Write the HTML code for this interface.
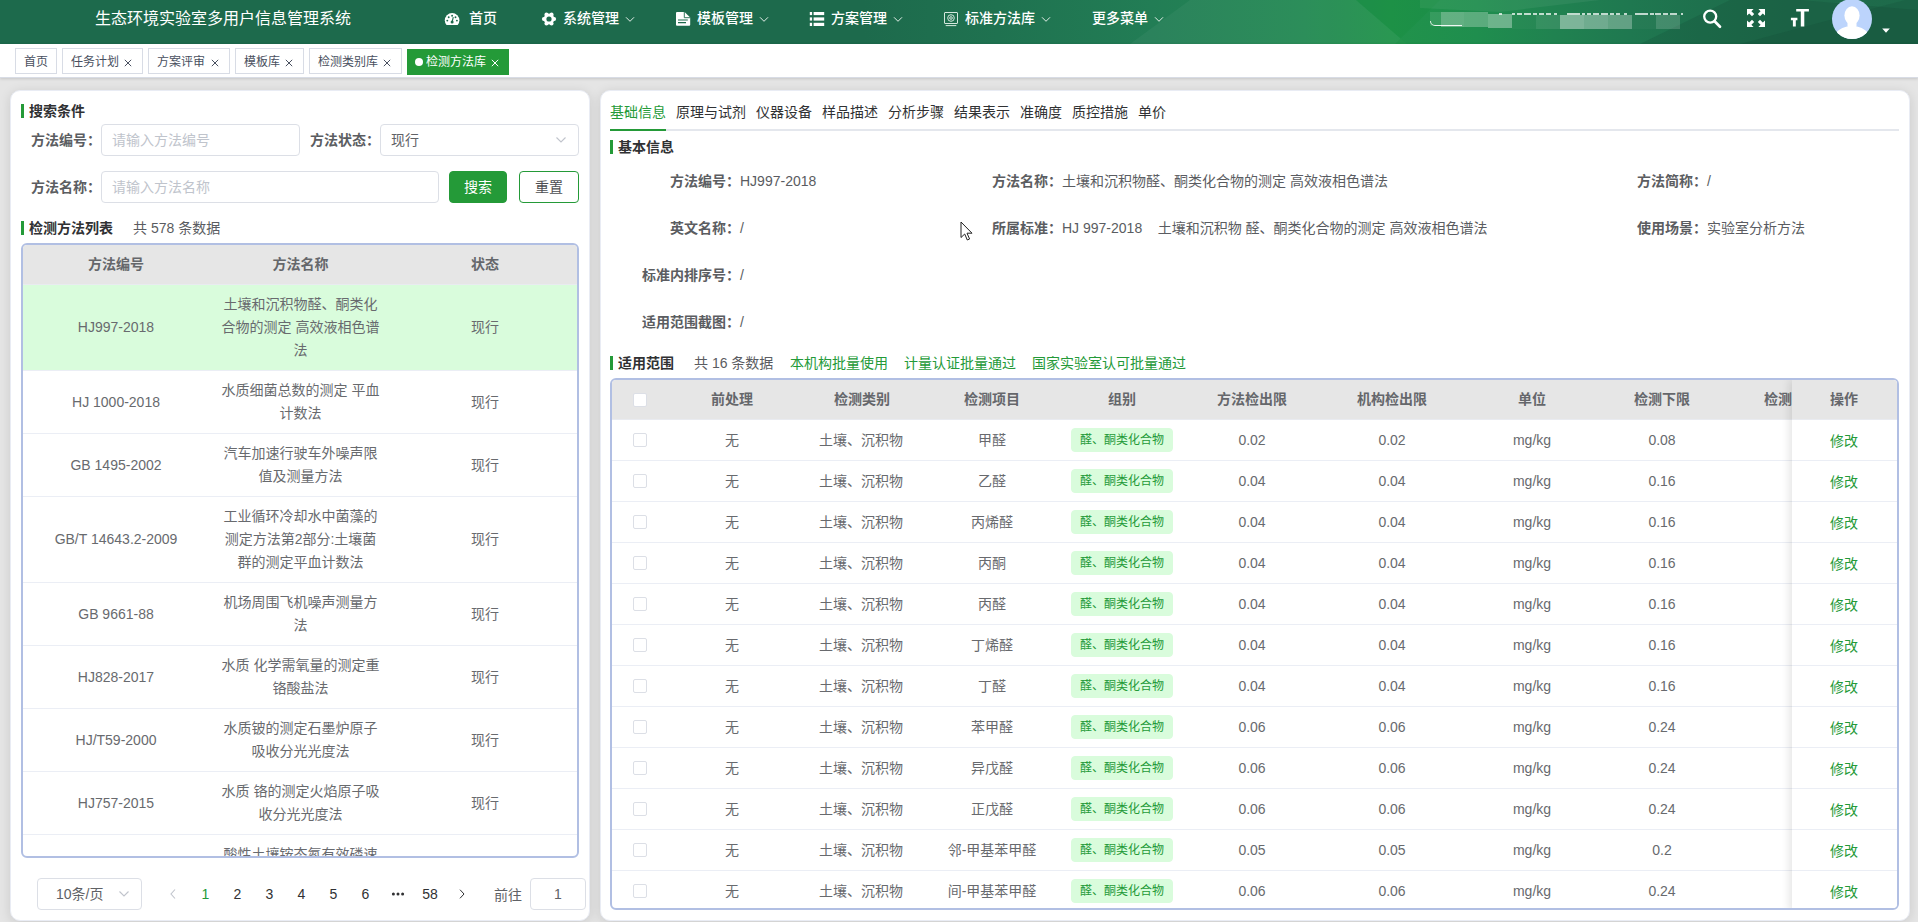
<!DOCTYPE html>
<html lang="zh-CN">
<head>
<meta charset="utf-8">
<title>生态环境实验室多用户信息管理系统</title>
<style>
*{box-sizing:border-box;}
html,body{margin:0;padding:0;}
body{width:1918px;height:922px;overflow:hidden;position:relative;background:#e5e5e5;
  font-family:"Liberation Sans","Noto Sans CJK SC",sans-serif;font-size:14px;color:#606266;}
.abs{position:absolute;white-space:nowrap;}
/* header */
#hd{position:absolute;left:0;top:0;width:1918px;height:44px;background:#1d6a4c;overflow:hidden;}
#hd svg.bg{position:absolute;left:0;top:0;}
#hd .title{position:absolute;left:95px;top:0;height:38px;line-height:38px;font-size:16px;color:#fff;white-space:nowrap;}
#hd .nav{position:absolute;top:0;height:38px;line-height:36px;font-size:14px;color:#fff;font-weight:500;white-space:nowrap;}
#hd .ico{position:absolute;}
/* tags */
#tags{position:absolute;left:0;top:44px;width:1918px;height:34px;background:#fff;border-bottom:1px solid #d8dce5;box-shadow:0 1px 3px 0 rgba(0,0,0,.12),0 0 3px 0 rgba(0,0,0,.04);}
#tags .tg{position:absolute;top:4px;height:26px;line-height:26px;border:1px solid #d8dce5;background:#fff;color:#495060;font-size:12px;padding:0 8px;white-space:nowrap;}
#tags .tg.on{top:5px;background:#249a38;border-color:#249a38;color:#fff;padding-left:7px;line-height:24px;}
#tags .tg .x{position:absolute;right:10px;top:10px;}
#tags .tg.on .x{top:9px;right:9px;}
#tags .tg.on:before{content:"";display:inline-block;width:8px;height:8px;border-radius:50%;background:#fff;margin-right:3px;position:relative;top:0px;}
/* panels */
.panel{position:absolute;top:90px;height:831px;background:#fff;border-radius:10px;border:1px solid #e9ecf4;box-shadow:0 2px 12px 0 rgba(0,0,0,.12);}
.sec{position:absolute;height:14px;border-left:3px solid #249a38;padding-left:5px;line-height:14px;font-size:14px;font-weight:bold;color:#303133;white-space:nowrap;}
.lbl{position:absolute;font-weight:bold;color:#5b5d61;font-size:14px;white-space:nowrap;line-height:20px;}
.val{position:absolute;color:#5a5c61;font-size:14px;white-space:nowrap;line-height:20px;}
.inp{position:absolute;height:32px;border:1px solid #dcdfe6;border-radius:4px;background:#fff;line-height:30px;padding-left:10px;color:#c0c4cc;font-size:14px;white-space:nowrap;}
.btn{position:absolute;height:32px;line-height:30px;border-radius:4px;font-size:14px;text-align:center;border:1px solid #249a38;}
.tbl{position:absolute;border:2px solid #b1bfe3;border-radius:6px;overflow:hidden;background:#fff;}
.tbl .th{position:absolute;left:0;top:0;height:40px;background:#e6e6e6;width:100%;border-bottom:1px solid #e9ebf0;}
.tbl .c{position:absolute;text-align:center;white-space:nowrap;line-height:23px;font-size:14px;color:#686a6e;transform:translateX(-50%);}
.tbl .h{font-weight:bold;color:#65676b;}
.tbl .ln{position:absolute;left:0;width:100%;height:1px;background:#ebeef5;}
.green{color:#249a38;}
</style>
<style>
.cb{position:absolute;width:14px;height:14px;border:1px solid #dcdfe6;border-radius:2px;background:#fff;}
.tag{position:absolute;height:24px;line-height:22px;width:102px;text-align:center;font-size:12px;color:#249a38;background:#d9fcdc;border:1px solid #d9fcdc;border-radius:4px;white-space:nowrap;}
.fix{position:absolute;background:#fff;box-shadow:-3px 0 8px rgba(0,0,0,.10);}
</style>
</head>
<body>
<div id="hd">
<svg class="bg" width="1918" height="44" viewBox="0 0 1918 44" preserveAspectRatio="none">
<defs>
<linearGradient id="g1" gradientUnits="userSpaceOnUse" x1="0" y1="0" x2="1918" y2="0">
<stop offset="0" stop-color="#1d6a4c"/>
<stop offset="0.45" stop-color="#1d6a4c"/>
<stop offset="0.52" stop-color="#1f7250"/>
<stop offset="0.6" stop-color="#227d55"/>
<stop offset="0.68" stop-color="#238953"/>
<stop offset="0.725" stop-color="#21934b"/>
<stop offset="0.77" stop-color="#1f8e4e"/>
<stop offset="0.81" stop-color="#208250"/>
<stop offset="0.85" stop-color="#1f7850"/>
<stop offset="0.89" stop-color="#1e704d"/>
<stop offset="0.94" stop-color="#1e6a4a"/>
<stop offset="1" stop-color="#1e6b4b"/>
</linearGradient>
</defs>
<rect x="0" y="0" width="1918" height="44" fill="url(#g1)"/>
<polygon points="1190,0 1356,0 1407,44 1130,44" fill="#ffffff" opacity="0.045"/>
<polygon points="1356,0 1440,0 1395,44 1407,44" fill="#0a8a30" opacity="0.18"/>
<polygon points="1420,0 1600,0 1500,12 1420,8" fill="#ffffff" opacity="0.06"/>
<polygon points="1640,44 1918,44 1918,10 1800,0 1730,0" fill="#0c3a2c" opacity="0.16"/>
<polygon points="1740,44 1918,44 1918,0 1905,0" fill="#0c3a2c" opacity="0.14"/>
</svg>
<div class="title">生态环境实验室多用户信息管理系统</div>
<div class="nav" style="left:469px">首页</div>
<div class="nav" style="left:563px">系统管理</div>
<div class="nav" style="left:697px">模板管理</div>
<div class="nav" style="left:831px">方案管理</div>
<div class="nav" style="left:965px">标准方法库</div>
<div class="nav" style="left:1092px">更多菜单</div>
<svg class="ico" style="left:625px;top:16px" width="10" height="7" viewBox="0 0 10 7"><path d="M1 1.3 L5 5.3 L9 1.3" fill="none" stroke="#e4efe9" stroke-width="1"/></svg>
<svg class="ico" style="left:759px;top:16px" width="10" height="7" viewBox="0 0 10 7"><path d="M1 1.3 L5 5.3 L9 1.3" fill="none" stroke="#e4efe9" stroke-width="1"/></svg>
<svg class="ico" style="left:893px;top:16px" width="10" height="7" viewBox="0 0 10 7"><path d="M1 1.3 L5 5.3 L9 1.3" fill="none" stroke="#e4efe9" stroke-width="1"/></svg>
<svg class="ico" style="left:1041px;top:16px" width="10" height="7" viewBox="0 0 10 7"><path d="M1 1.3 L5 5.3 L9 1.3" fill="none" stroke="#e4efe9" stroke-width="1"/></svg>
<svg class="ico" style="left:1154px;top:16px" width="10" height="7" viewBox="0 0 10 7"><path d="M1 1.3 L5 5.3 L9 1.3" fill="none" stroke="#e4efe9" stroke-width="1"/></svg>
<svg class="ico" style="left:444px;top:12px" width="16" height="14" viewBox="0 0 16 14"><defs><clipPath id="dc"><rect x="0" y="0" width="16" height="12.9"/></clipPath></defs><circle cx="8.1" cy="8.3" r="7.3" fill="#fff" clip-path="url(#dc)"/><g fill="#1d6a4c"><circle cx="3.3" cy="8.6" r=".95"/><circle cx="4.7" cy="5.2" r=".95"/><circle cx="8.1" cy="3.8" r=".95"/><circle cx="11.5" cy="5.2" r=".95"/><circle cx="12.9" cy="8.6" r=".95"/><circle cx="8.1" cy="10" r="1.5"/></g><path d="M8.1 10 L9.3 5.2" stroke="#1d6a4c" stroke-width="1.1" fill="none"/></svg>
<svg class="ico" style="left:541px;top:11px" width="16" height="16" viewBox="0 0 16 16"><g fill="#fff"><circle cx="8" cy="8" r="5.4"/><circle cx="13.1" cy="8" r="2"/><circle cx="2.9" cy="8" r="2"/><circle cx="10.55" cy="3.58" r="2"/><circle cx="5.45" cy="3.58" r="2"/><circle cx="10.55" cy="12.42" r="2"/><circle cx="5.45" cy="12.42" r="2"/></g><circle cx="8" cy="8" r="2.6" fill="#1d6a4c"/></svg>
<svg class="ico" style="left:675px;top:12px" width="16" height="14" viewBox="0 0 16 14"><path fill="#fff" d="M2 0h7.6l5.6 5.4V12.7a1 1 0 0 1-1 1H2a1 1 0 0 1-1-1V1a1 1 0 0 1 1-1z"/><path d="M9.3 0v5.7h5.9" stroke="#1d6a4c" stroke-width="0.9" fill="none"/><path d="M3 8h9.8M3 10.7h8" stroke="#1d6a4c" stroke-width="1.2" fill="none"/></svg>
<svg class="ico" style="left:809px;top:12px" width="16" height="14" viewBox="0 0 16 14"><g fill="#fff"><rect x="0.8" y="0" width="2.3" height="3.1"/><rect x="4.6" y="0" width="10.6" height="3.1"/><rect x="0.8" y="5.4" width="2.3" height="3.2"/><rect x="4.6" y="5.4" width="10.6" height="3.2"/><rect x="0.8" y="10.8" width="2.3" height="3.2"/><rect x="4.6" y="10.8" width="10.6" height="3.2"/></g></svg>
<svg class="ico" style="left:943px;top:11px" width="16" height="16" viewBox="0 0 16 16"><g fill="none" stroke="#d5e8de" stroke-width="1"><rect x="1.5" y="1.5" width="13" height="11" rx="0.5"/><circle cx="8" cy="7" r="3.3"/><circle cx="8" cy="7" r="1.3"/><path d="M2.7 14.6h10.6"/></g></svg>
<div class="abs" style="left:1430.0px;top:12.0px;width:10.5px;height:14.0px;background:rgba(255,255,255,0.10)"></div>
<div class="abs" style="left:1440.5px;top:12.0px;width:23.5px;height:14.5px;background:rgba(255,255,255,0.30)"></div>
<div class="abs" style="left:1464.0px;top:12.0px;width:24.0px;height:14.5px;background:rgba(255,255,255,0.27)"></div>
<div class="abs" style="left:1488.0px;top:13.5px;width:24.0px;height:14.0px;background:rgba(255,255,255,0.35)"></div>
<div class="abs" style="left:1512.0px;top:15.0px;width:24.0px;height:13.5px;background:rgba(255,255,255,0.03)"></div>
<div class="abs" style="left:1536.0px;top:15.0px;width:24.0px;height:13.5px;background:rgba(255,255,255,0.10)"></div>
<div class="abs" style="left:1560.0px;top:15.0px;width:23.5px;height:13.5px;background:rgba(255,255,255,0.42)"></div>
<div class="abs" style="left:1583.5px;top:15.0px;width:24.8px;height:13.5px;background:rgba(255,255,255,0.36)"></div>
<div class="abs" style="left:1608.3px;top:15.0px;width:23.5px;height:13.5px;background:rgba(255,255,255,0.30)"></div>
<div class="abs" style="left:1631.8px;top:15.0px;width:24.0px;height:13.5px;background:rgba(255,255,255,0.03)"></div>
<div class="abs" style="left:1655.8px;top:15.0px;width:24.2px;height:13.5px;background:rgba(255,255,255,0.17)"></div>
<div class="abs" style="left:1430px;top:21px;width:32px;height:5px;border-left:1.5px solid rgba(255,255,255,.85);border-bottom:1.5px solid rgba(255,255,255,.9);border-bottom-left-radius:5px"></div>
<div class="abs" style="left:1498.8px;top:13px;width:2.9px;height:2px;background:rgba(255,255,255,.72)"></div>
<div class="abs" style="left:1511.7px;top:13px;width:3.2px;height:2px;background:rgba(255,255,255,.72)"></div>
<div class="abs" style="left:1516.6px;top:13px;width:5.5px;height:2px;background:rgba(255,255,255,.72)"></div>
<div class="abs" style="left:1523.9px;top:13px;width:7.0px;height:2px;background:rgba(255,255,255,.72)"></div>
<div class="abs" style="left:1532.7px;top:13px;width:4.1px;height:2px;background:rgba(255,255,255,.72)"></div>
<div class="abs" style="left:1539.1px;top:13px;width:5.0px;height:2px;background:rgba(255,255,255,.72)"></div>
<div class="abs" style="left:1545.8px;top:13px;width:5.5px;height:2px;background:rgba(255,255,255,.72)"></div>
<div class="abs" style="left:1553.7px;top:13px;width:3.5px;height:2px;background:rgba(255,255,255,.72)"></div>
<div class="abs" style="left:1567.4px;top:13px;width:13.1px;height:2px;background:rgba(255,255,255,.72)"></div>
<div class="abs" style="left:1581.5px;top:13px;width:3.5px;height:2px;background:rgba(255,255,255,.72)"></div>
<div class="abs" style="left:1586.7px;top:13px;width:4.8px;height:2px;background:rgba(255,255,255,.72)"></div>
<div class="abs" style="left:1593.1px;top:13px;width:6.4px;height:2px;background:rgba(255,255,255,.72)"></div>
<div class="abs" style="left:1601.3px;top:13px;width:7.0px;height:2px;background:rgba(255,255,255,.72)"></div>
<div class="abs" style="left:1610.1px;top:13px;width:4.1px;height:2px;background:rgba(255,255,255,.72)"></div>
<div class="abs" style="left:1615.9px;top:13px;width:4.1px;height:2px;background:rgba(255,255,255,.72)"></div>
<div class="abs" style="left:1624.4px;top:13px;width:2.9px;height:2px;background:rgba(255,255,255,.72)"></div>
<div class="abs" style="left:1635.3px;top:13px;width:12.4px;height:2px;background:rgba(255,255,255,.72)"></div>
<div class="abs" style="left:1649.5px;top:13px;width:4.1px;height:2px;background:rgba(255,255,255,.72)"></div>
<div class="abs" style="left:1655.3px;top:13px;width:5.5px;height:2px;background:rgba(255,255,255,.72)"></div>
<div class="abs" style="left:1662.6px;top:13px;width:5.5px;height:2px;background:rgba(255,255,255,.72)"></div>
<div class="abs" style="left:1669.9px;top:13px;width:7.0px;height:2px;background:rgba(255,255,255,.72)"></div>
<div class="abs" style="left:1681.3px;top:13px;width:1.5px;height:2px;background:rgba(255,255,255,.72)"></div>
<svg class="ico" style="left:1702px;top:9px" width="20" height="20" viewBox="0 0 20 20"><circle cx="8.2" cy="7.6" r="6" fill="none" stroke="#fff" stroke-width="2.3"/><path d="M12.6 12.2 L18 17.8" stroke="#fff" stroke-width="2.7" stroke-linecap="round"/></svg>
<svg class="ico" style="left:1746px;top:8px" width="20" height="20" viewBox="0 0 20 20"><g fill="#fff"><path d="M1 1h6.6L5.4 3.2 8.2 6 6 8.2 3.2 5.4 1 7.6z"/><path d="M19 1v6.6L16.8 5.4 14 8.2 11.8 6 14.6 3.2 12.4 1z"/><path d="M1 19v-6.6L3.2 14.6 6 11.8 8.2 14 5.4 16.8 7.6 19z"/><path d="M19 19h-6.6L14.6 16.8 11.8 14 14 11.8 16.8 14.6 19 12.4z"/></g></svg>
<svg class="ico" style="left:1789px;top:8px" width="22" height="20" viewBox="0 0 22 20"><g fill="#fff"><path d="M7.2 .9h12.7v2.7h-4.6V18.4h-3.5V3.6H7.2z"/><path d="M1.9 9.8h6.5v2.4H6.8V18.4H3.9V12.2H1.9z"/></g></svg>
<div class="abs" style="left:1832px;top:-1px;width:40px;height:40px;border-radius:50%;background:#bcd4fc;overflow:hidden"><svg width="40" height="40" viewBox="0 0 40 40"><ellipse cx="20" cy="16.5" rx="7.6" ry="9.2" fill="#fff"/><path d="M2 42c0-9.5 6-12.5 13-14.5l5 1.5 5-1.5c7 2 13 5 13 14.5z" fill="#fff"/><rect x="15.5" y="22" width="9" height="8" fill="#fff"/></svg></div>
<svg class="ico" style="left:1881px;top:28px" width="10" height="6" viewBox="0 0 10 6"><path d="M1.2 .5h7.6L5 4.8z" fill="#fff"/></svg>
</div>
<div id="tags">
<span class="tg" style="left:15px;width:42px">首页</span>
<span class="tg" style="left:62px;width:81px">任务计划<svg class="x" width="8" height="8" viewBox="0 0 8 8"><path d="M.8 .8 L7.2 7.2 M7.2 .8 L.8 7.2" stroke="#495060" stroke-width="1" fill="none"/></svg></span>
<span class="tg" style="left:148px;width:82px">方案评审<svg class="x" width="8" height="8" viewBox="0 0 8 8"><path d="M.8 .8 L7.2 7.2 M7.2 .8 L.8 7.2" stroke="#495060" stroke-width="1" fill="none"/></svg></span>
<span class="tg" style="left:235px;width:69px">模板库<svg class="x" width="8" height="8" viewBox="0 0 8 8"><path d="M.8 .8 L7.2 7.2 M7.2 .8 L.8 7.2" stroke="#495060" stroke-width="1" fill="none"/></svg></span>
<span class="tg" style="left:309px;width:93px">检测类别库<svg class="x" width="8" height="8" viewBox="0 0 8 8"><path d="M.8 .8 L7.2 7.2 M7.2 .8 L.8 7.2" stroke="#495060" stroke-width="1" fill="none"/></svg></span>
<span class="tg on" style="left:407px;width:102px">检测方法库<svg class="x" width="8" height="8" viewBox="0 0 8 8"><path d="M.8 .8 L7.2 7.2 M7.2 .8 L.8 7.2" stroke="#ffffff" stroke-width="1" fill="none"/></svg></span>
</div>
<div class="panel" style="left:10px;width:580px"></div>
<div class="sec" style="left:21px;top:104px">搜索条件</div>
<div class="lbl" style="left:31px;top:130px">方法编号：</div>
<div class="inp" style="left:101px;top:124px;width:199px">请输入方法编号</div>
<div class="lbl" style="left:310px;top:130px">方法状态：</div>
<div class="inp" style="left:380px;top:124px;width:199px;color:#606266">现行</div>
<svg class="abs" style="left:555px;top:136px" width="12" height="8" viewBox="0 0 12 8"><path d="M1.5 1.5 L6 6 L10.5 1.5" fill="none" stroke="#c0c4cc" stroke-width="1.1"/></svg>
<div class="lbl" style="left:31px;top:177px">方法名称：</div>
<div class="inp" style="left:101px;top:171px;width:338px">请输入方法名称</div>
<div class="btn" style="left:449px;top:171px;width:58px;background:#249a38;color:#fff">搜索</div>
<div class="btn" style="left:519px;top:171px;width:60px;background:#fff;color:#4d4f53">重置</div>
<div class="sec" style="left:21px;top:221px">检测方法列表</div>
<div class="val" style="left:133px;top:218px">共 578 条数据</div>
<div class="tbl" style="left:21px;top:243px;width:558px;height:615px">
<div class="th"></div>
<div class="c h" style="left:93.0px;top:8px">方法编号</div>
<div class="c h" style="left:277.5px;top:8px">方法名称</div>
<div class="c h" style="left:462.0px;top:8px">状态</div>
<div style="position:absolute;left:0;top:40px;width:100%;height:86px;background:#d9fcdc"></div>
<div class="c" style="left:93.0px;top:71.0px">HJ997-2018</div>
<div class="c" style="left:277.5px;top:48px">土壤和沉积物醛、酮类化<br>合物的测定 高效液相色谱<br>法</div>
<div class="c" style="left:462.0px;top:71.0px">现行</div>
<div class="ln" style="top:125px"></div>
<div class="c" style="left:93.0px;top:145.5px">HJ 1000-2018</div>
<div class="c" style="left:277.5px;top:134px">水质细菌总数的测定 平血<br>计数法</div>
<div class="c" style="left:462.0px;top:145.5px">现行</div>
<div class="ln" style="top:188px"></div>
<div class="c" style="left:93.0px;top:208.5px">GB 1495-2002</div>
<div class="c" style="left:277.5px;top:197px">汽车加速行驶车外噪声限<br>值及测量方法</div>
<div class="c" style="left:462.0px;top:208.5px">现行</div>
<div class="ln" style="top:251px"></div>
<div class="c" style="left:93.0px;top:283.0px">GB/T 14643.2-2009</div>
<div class="c" style="left:277.5px;top:260px">工业循环冷却水中菌藻的<br>测定方法第2部分:土壤菌<br>群的测定平血计数法</div>
<div class="c" style="left:462.0px;top:283.0px">现行</div>
<div class="ln" style="top:337px"></div>
<div class="c" style="left:93.0px;top:357.5px">GB 9661-88</div>
<div class="c" style="left:277.5px;top:346px">机场周围飞机噪声测量方<br>法</div>
<div class="c" style="left:462.0px;top:357.5px">现行</div>
<div class="ln" style="top:400px"></div>
<div class="c" style="left:93.0px;top:420.5px">HJ828-2017</div>
<div class="c" style="left:277.5px;top:409px">水质 化学需氧量的测定重<br>铬酸盐法</div>
<div class="c" style="left:462.0px;top:420.5px">现行</div>
<div class="ln" style="top:463px"></div>
<div class="c" style="left:93.0px;top:483.5px">HJ/T59-2000</div>
<div class="c" style="left:277.5px;top:472px">水质铍的测定石墨炉原子<br>吸收分光光度法</div>
<div class="c" style="left:462.0px;top:483.5px">现行</div>
<div class="ln" style="top:526px"></div>
<div class="c" style="left:93.0px;top:546.5px">HJ757-2015</div>
<div class="c" style="left:277.5px;top:535px">水质 铬的测定火焰原子吸<br>收分光光度法</div>
<div class="c" style="left:462.0px;top:546.5px">现行</div>
<div class="ln" style="top:589px"></div>
<div class="c" style="left:93.0px;top:621.0px">NY/T 1849-2010</div>
<div class="c" style="left:277.5px;top:598px">酸性土壤铵态氮有效磷速<br>效钾的测定 联合浸提-比<br>色法</div>
<div class="c" style="left:462.0px;top:621.0px">现行</div>
<div class="ln" style="top:675px"></div>
</div>
<div class="inp" style="left:37px;top:878px;width:105px;height:32px;color:#606266;font-size:14px;padding-left:18px">10条/页</div>
<svg class="abs" style="left:118px;top:890px" width="12" height="8" viewBox="0 0 12 8"><path d="M1.5 1.5 L6 6 L10.5 1.5" fill="none" stroke="#c0c4cc" stroke-width="1.1"/></svg>
<svg class="abs" style="left:169px;top:888px" width="8" height="12" viewBox="0 0 8 12"><path d="M6 1.5 L2 6 L6 10.5" fill="none" stroke="#c0c4cc" stroke-width="1.1"/></svg>
<div class="abs" style="left:205.5px;top:883px;transform:translateX(-50%);font-size:14px;line-height:22px;color:#249a38">1</div>
<div class="abs" style="left:237.5px;top:883px;transform:translateX(-50%);font-size:14px;line-height:22px;color:#303133">2</div>
<div class="abs" style="left:269.5px;top:883px;transform:translateX(-50%);font-size:14px;line-height:22px;color:#303133">3</div>
<div class="abs" style="left:301.5px;top:883px;transform:translateX(-50%);font-size:14px;line-height:22px;color:#303133">4</div>
<div class="abs" style="left:333.5px;top:883px;transform:translateX(-50%);font-size:14px;line-height:22px;color:#303133">5</div>
<div class="abs" style="left:365.5px;top:883px;transform:translateX(-50%);font-size:14px;line-height:22px;color:#303133">6</div>
<div class="abs" style="left:430.0px;top:883px;transform:translateX(-50%);font-size:14px;line-height:22px;color:#303133">58</div>
<svg class="abs" style="left:390px;top:890px" width="16" height="8" viewBox="0 0 16 8"><g fill="#303133"><circle cx="3.4" cy="4" r="1.5"/><circle cx="8" cy="4" r="1.5"/><circle cx="12.6" cy="4" r="1.5"/></g></svg>
<svg class="abs" style="left:458px;top:888px" width="8" height="12" viewBox="0 0 8 12"><path d="M2 1.7 L6 6 L2 10.3" fill="none" stroke="#303133" stroke-width="1"/></svg>
<div class="abs" style="left:494px;top:884px;font-size:14px;line-height:22px;color:#606266">前往</div>
<div class="inp" style="left:530px;top:878px;width:56px;height:32px;color:#606266;font-size:14px;padding:0;text-align:center">1</div>
<div class="panel" style="left:600px;width:1310px"></div>
<div class="abs" style="left:610px;top:102px;line-height:20px;font-size:14px;color:#249a38">基础信息</div>
<div class="abs" style="left:676px;top:102px;line-height:20px;font-size:14px;color:#303133">原理与试剂</div>
<div class="abs" style="left:756px;top:102px;line-height:20px;font-size:14px;color:#303133">仪器设备</div>
<div class="abs" style="left:822px;top:102px;line-height:20px;font-size:14px;color:#303133">样品描述</div>
<div class="abs" style="left:888px;top:102px;line-height:20px;font-size:14px;color:#303133">分析步骤</div>
<div class="abs" style="left:954px;top:102px;line-height:20px;font-size:14px;color:#303133">结果表示</div>
<div class="abs" style="left:1020px;top:102px;line-height:20px;font-size:14px;color:#303133">准确度</div>
<div class="abs" style="left:1072px;top:102px;line-height:20px;font-size:14px;color:#303133">质控措施</div>
<div class="abs" style="left:1138px;top:102px;line-height:20px;font-size:14px;color:#303133">单价</div>
<div class="abs" style="left:610px;top:129px;width:1289px;height:2px;background:#e4e7ed"></div>
<div class="abs" style="left:610px;top:129px;width:56px;height:2px;background:#249a38"></div>
<div class="sec" style="left:610px;top:140px">基本信息</div>
<div class="lbl" style="right:1178px;top:171px">方法编号：</div>
<div class="val" style="left:740px;top:171px">HJ997-2018</div>
<div class="lbl" style="right:856px;top:171px">方法名称：</div>
<div class="val" style="left:1062px;top:171px">土壤和沉积物醛、酮类化合物的测定 高效液相色谱法</div>
<div class="lbl" style="right:211px;top:171px">方法简称：</div>
<div class="val" style="left:1707px;top:171px">/</div>
<div class="lbl" style="right:1178px;top:218px">英文名称：</div>
<div class="val" style="left:740px;top:218px">/</div>
<div class="lbl" style="right:856px;top:218px">所属标准：</div>
<div class="val" style="left:1062px;top:218px">HJ 997-2018&nbsp;&nbsp;&nbsp;&nbsp;土壤和沉积物 醛、酮类化合物的测定 高效液相色谱法</div>
<div class="lbl" style="right:211px;top:218px">使用场景：</div>
<div class="val" style="left:1707px;top:218px">实验室分析方法</div>
<div class="lbl" style="right:1178px;top:265px">标准内排序号：</div>
<div class="val" style="left:740px;top:265px">/</div>
<div class="lbl" style="right:1178px;top:312px">适用范围截图：</div>
<div class="val" style="left:740px;top:312px">/</div>
<svg class="abs" style="left:960px;top:221px" width="14" height="21" viewBox="0 0 14 21"><path d="M1 1 L1 16.5 L4.7 13 L7.3 19 L9.6 18 L7 12.2 L12 12.2 Z" fill="#fff" stroke="#222" stroke-width="1"/></svg>
<div class="sec" style="left:610px;top:356px">适用范围</div>
<div class="val" style="left:694px;top:353px">共 16 条数据</div>
<div class="val green" style="left:790px;top:353px;color:#249a38">本机构批量使用</div>
<div class="val green" style="left:904px;top:353px;color:#249a38">计量认证批量通过</div>
<div class="val green" style="left:1032px;top:353px;color:#249a38">国家实验室认可批量通过</div>
<div class="tbl" style="left:610px;top:378px;width:1289px;height:532px">
<div class="th"></div>
<div class="cb" style="left:21px;top:13px"></div>
<div class="c h" style="left:120px;top:8px">前处理</div>
<div class="c h" style="left:250px;top:8px">检测类别</div>
<div class="c h" style="left:380px;top:8px">检测项目</div>
<div class="c h" style="left:510px;top:8px">组别</div>
<div class="c h" style="left:640px;top:8px">方法检出限</div>
<div class="c h" style="left:780px;top:8px">机构检出限</div>
<div class="c h" style="left:920px;top:8px">单位</div>
<div class="c h" style="left:1050px;top:8px">检测下限</div>
<div class="c h" style="left:1180px;top:8px">检测上限</div>
<div class="cb" style="left:21px;top:53px"></div>
<div class="c" style="left:120px;top:49px">无</div>
<div class="c" style="left:249px;top:49px">土壤、沉积物</div>
<div class="c" style="left:380px;top:49px">甲醛</div>
<div class="tag" style="left:459px;top:48px">醛、酮类化合物</div>
<div class="c" style="left:640px;top:49px">0.02</div>
<div class="c" style="left:780px;top:49px">0.02</div>
<div class="c" style="left:920px;top:49px">mg/kg</div>
<div class="c" style="left:1050px;top:49px">0.08</div>
<div class="ln" style="top:80px"></div>
<div class="cb" style="left:21px;top:94px"></div>
<div class="c" style="left:120px;top:90px">无</div>
<div class="c" style="left:249px;top:90px">土壤、沉积物</div>
<div class="c" style="left:380px;top:90px">乙醛</div>
<div class="tag" style="left:459px;top:89px">醛、酮类化合物</div>
<div class="c" style="left:640px;top:90px">0.04</div>
<div class="c" style="left:780px;top:90px">0.04</div>
<div class="c" style="left:920px;top:90px">mg/kg</div>
<div class="c" style="left:1050px;top:90px">0.16</div>
<div class="ln" style="top:121px"></div>
<div class="cb" style="left:21px;top:135px"></div>
<div class="c" style="left:120px;top:131px">无</div>
<div class="c" style="left:249px;top:131px">土壤、沉积物</div>
<div class="c" style="left:380px;top:131px">丙烯醛</div>
<div class="tag" style="left:459px;top:130px">醛、酮类化合物</div>
<div class="c" style="left:640px;top:131px">0.04</div>
<div class="c" style="left:780px;top:131px">0.04</div>
<div class="c" style="left:920px;top:131px">mg/kg</div>
<div class="c" style="left:1050px;top:131px">0.16</div>
<div class="ln" style="top:162px"></div>
<div class="cb" style="left:21px;top:176px"></div>
<div class="c" style="left:120px;top:172px">无</div>
<div class="c" style="left:249px;top:172px">土壤、沉积物</div>
<div class="c" style="left:380px;top:172px">丙酮</div>
<div class="tag" style="left:459px;top:171px">醛、酮类化合物</div>
<div class="c" style="left:640px;top:172px">0.04</div>
<div class="c" style="left:780px;top:172px">0.04</div>
<div class="c" style="left:920px;top:172px">mg/kg</div>
<div class="c" style="left:1050px;top:172px">0.16</div>
<div class="ln" style="top:203px"></div>
<div class="cb" style="left:21px;top:217px"></div>
<div class="c" style="left:120px;top:213px">无</div>
<div class="c" style="left:249px;top:213px">土壤、沉积物</div>
<div class="c" style="left:380px;top:213px">丙醛</div>
<div class="tag" style="left:459px;top:212px">醛、酮类化合物</div>
<div class="c" style="left:640px;top:213px">0.04</div>
<div class="c" style="left:780px;top:213px">0.04</div>
<div class="c" style="left:920px;top:213px">mg/kg</div>
<div class="c" style="left:1050px;top:213px">0.16</div>
<div class="ln" style="top:244px"></div>
<div class="cb" style="left:21px;top:258px"></div>
<div class="c" style="left:120px;top:254px">无</div>
<div class="c" style="left:249px;top:254px">土壤、沉积物</div>
<div class="c" style="left:380px;top:254px">丁烯醛</div>
<div class="tag" style="left:459px;top:253px">醛、酮类化合物</div>
<div class="c" style="left:640px;top:254px">0.04</div>
<div class="c" style="left:780px;top:254px">0.04</div>
<div class="c" style="left:920px;top:254px">mg/kg</div>
<div class="c" style="left:1050px;top:254px">0.16</div>
<div class="ln" style="top:285px"></div>
<div class="cb" style="left:21px;top:299px"></div>
<div class="c" style="left:120px;top:295px">无</div>
<div class="c" style="left:249px;top:295px">土壤、沉积物</div>
<div class="c" style="left:380px;top:295px">丁醛</div>
<div class="tag" style="left:459px;top:294px">醛、酮类化合物</div>
<div class="c" style="left:640px;top:295px">0.04</div>
<div class="c" style="left:780px;top:295px">0.04</div>
<div class="c" style="left:920px;top:295px">mg/kg</div>
<div class="c" style="left:1050px;top:295px">0.16</div>
<div class="ln" style="top:326px"></div>
<div class="cb" style="left:21px;top:340px"></div>
<div class="c" style="left:120px;top:336px">无</div>
<div class="c" style="left:249px;top:336px">土壤、沉积物</div>
<div class="c" style="left:380px;top:336px">苯甲醛</div>
<div class="tag" style="left:459px;top:335px">醛、酮类化合物</div>
<div class="c" style="left:640px;top:336px">0.06</div>
<div class="c" style="left:780px;top:336px">0.06</div>
<div class="c" style="left:920px;top:336px">mg/kg</div>
<div class="c" style="left:1050px;top:336px">0.24</div>
<div class="ln" style="top:367px"></div>
<div class="cb" style="left:21px;top:381px"></div>
<div class="c" style="left:120px;top:377px">无</div>
<div class="c" style="left:249px;top:377px">土壤、沉积物</div>
<div class="c" style="left:380px;top:377px">异戊醛</div>
<div class="tag" style="left:459px;top:376px">醛、酮类化合物</div>
<div class="c" style="left:640px;top:377px">0.06</div>
<div class="c" style="left:780px;top:377px">0.06</div>
<div class="c" style="left:920px;top:377px">mg/kg</div>
<div class="c" style="left:1050px;top:377px">0.24</div>
<div class="ln" style="top:408px"></div>
<div class="cb" style="left:21px;top:422px"></div>
<div class="c" style="left:120px;top:418px">无</div>
<div class="c" style="left:249px;top:418px">土壤、沉积物</div>
<div class="c" style="left:380px;top:418px">正戊醛</div>
<div class="tag" style="left:459px;top:417px">醛、酮类化合物</div>
<div class="c" style="left:640px;top:418px">0.06</div>
<div class="c" style="left:780px;top:418px">0.06</div>
<div class="c" style="left:920px;top:418px">mg/kg</div>
<div class="c" style="left:1050px;top:418px">0.24</div>
<div class="ln" style="top:449px"></div>
<div class="cb" style="left:21px;top:463px"></div>
<div class="c" style="left:120px;top:459px">无</div>
<div class="c" style="left:249px;top:459px">土壤、沉积物</div>
<div class="c" style="left:380px;top:459px">邻-甲基苯甲醛</div>
<div class="tag" style="left:459px;top:458px">醛、酮类化合物</div>
<div class="c" style="left:640px;top:459px">0.05</div>
<div class="c" style="left:780px;top:459px">0.05</div>
<div class="c" style="left:920px;top:459px">mg/kg</div>
<div class="c" style="left:1050px;top:459px">0.2</div>
<div class="ln" style="top:490px"></div>
<div class="cb" style="left:21px;top:504px"></div>
<div class="c" style="left:120px;top:500px">无</div>
<div class="c" style="left:249px;top:500px">土壤、沉积物</div>
<div class="c" style="left:380px;top:500px">间-甲基苯甲醛</div>
<div class="tag" style="left:459px;top:499px">醛、酮类化合物</div>
<div class="c" style="left:640px;top:500px">0.06</div>
<div class="c" style="left:780px;top:500px">0.06</div>
<div class="c" style="left:920px;top:500px">mg/kg</div>
<div class="c" style="left:1050px;top:500px">0.24</div>
<div class="ln" style="top:531px"></div>
<div class="fix" style="left:1180px;top:0;width:106px;height:531px">
<div class="th"></div>
<div class="c h" style="left:52px;top:8px">操作</div>
<div class="c" style="left:52px;top:50px;color:#249a38">修改</div>
<div class="ln" style="top:80px"></div>
<div class="c" style="left:52px;top:91px;color:#249a38">修改</div>
<div class="ln" style="top:121px"></div>
<div class="c" style="left:52px;top:132px;color:#249a38">修改</div>
<div class="ln" style="top:162px"></div>
<div class="c" style="left:52px;top:173px;color:#249a38">修改</div>
<div class="ln" style="top:203px"></div>
<div class="c" style="left:52px;top:214px;color:#249a38">修改</div>
<div class="ln" style="top:244px"></div>
<div class="c" style="left:52px;top:255px;color:#249a38">修改</div>
<div class="ln" style="top:285px"></div>
<div class="c" style="left:52px;top:296px;color:#249a38">修改</div>
<div class="ln" style="top:326px"></div>
<div class="c" style="left:52px;top:337px;color:#249a38">修改</div>
<div class="ln" style="top:367px"></div>
<div class="c" style="left:52px;top:378px;color:#249a38">修改</div>
<div class="ln" style="top:408px"></div>
<div class="c" style="left:52px;top:419px;color:#249a38">修改</div>
<div class="ln" style="top:449px"></div>
<div class="c" style="left:52px;top:460px;color:#249a38">修改</div>
<div class="ln" style="top:490px"></div>
<div class="c" style="left:52px;top:501px;color:#249a38">修改</div>
<div class="ln" style="top:531px"></div>
</div>
</div>
</body>
</html>
